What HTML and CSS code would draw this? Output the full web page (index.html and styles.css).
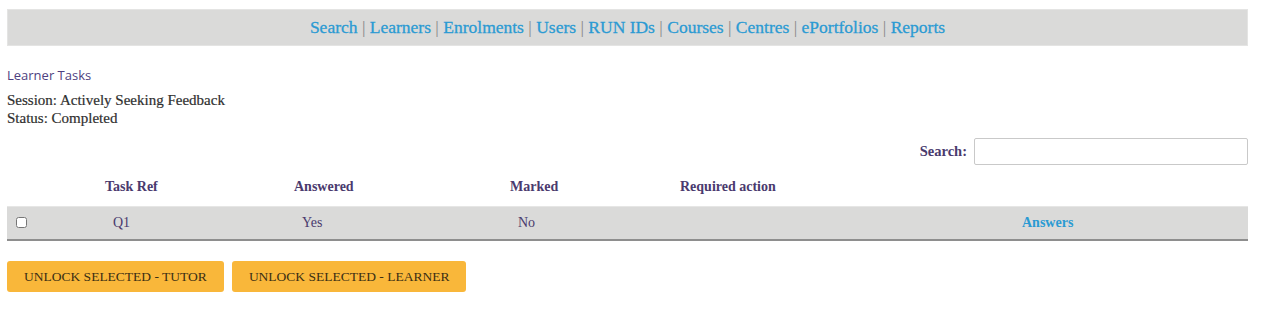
FILE: index.html
```html
<!DOCTYPE html>
<html lang="en">
<head>
  <meta charset="UTF-8" />
  <title>Learner Tasks</title>
  <link rel="stylesheet" href="styles.css">
</head>
<body>
  <div class="page">
    <!-- Top navigation -->
    <nav class="topnav">
      <a href="#">Search</a> | <a href="#">Learners</a> | <a href="#">Enrolments</a> |
      <a href="#">Users</a> | <a href="#">RUN IDs</a> | <a href="#">Courses</a> |
      <a href="#">Centres</a> | <a href="#">ePortfolios</a> | <a href="#">Reports</a>
    </nav>

    <h2 class="page-title">Learner Tasks</h2>
    <div class="session-info">
      <div>Session: Actively Seeking Feedback</div>
      <div>Status: Completed</div>
    </div>

    <div class="table-filter">
      <label for="taskSearch">Search:</label>
      <input type="search" id="taskSearch" />
    </div>

    <table class="tasks">
      <thead>
        <tr>
          <th class="col-check"></th>
          <th class="col-ref">Task Ref</th>
          <th class="col-ans">Answered</th>
          <th class="col-mark">Marked</th>
          <th class="col-req">Required action</th>
          <th class="col-link"></th>
        </tr>
      </thead>
      <tbody>
        <tr>
          <td class="col-check"><input type="checkbox" /></td>
          <td class="col-ref">Q1</td>
          <td>Yes</td>
          <td>No</td>
          <td></td>
          <td class="col-link"><a href="#">Answers</a></td>
        </tr>
      </tbody>
    </table>

    <div class="actions">
      <button>Unlock selected - Tutor</button>
      <button>Unlock selected - Learner</button>
    </div>
  </div>
</body>
</html>
```

FILE: styles.css
```css
* { box-sizing: border-box; margin: 0; padding: 0; }
body {
  background: #fff;
  font-family: "Liberation Serif", serif;
  color: #333;
}
.page { padding: 9px 28px 0 7px; }

.topnav {
  height: 37px;
  background: #dadad9;
  border: 1px solid #e4e4e3;
  text-align: center;
  font-size: 17.5px;
  line-height: 35px;
  color: #888;
}
.topnav a {
  color: #2b9ad3;
  text-decoration: none;
  -webkit-text-stroke: 0.3px #2b9ad3;
}

.page-title {
  margin-top: 20px;
  font-family: "Open Sans", sans-serif;
  font-weight: normal;
  font-size: 13px;
  color: #4e3f7f;
}
.session-info {
  margin-top: 7px;
  font-size: 15px;
  line-height: 18px;
  color: #2f2f2f;
  -webkit-text-stroke: 0.2px #2f2f2f;
}

.table-filter {
  display: flex;
  justify-content: flex-end;
  align-items: center;
  gap: 7px;
  margin-top: 11px;
  font-size: 14.5px;
  font-weight: bold;
  color: #4a3a6e;
}
.table-filter input {
  width: 274px;
  height: 27px;
  border: 1px solid #c9c9c9;
  border-radius: 2px;
}

.tasks {
  width: 100%;
  border-collapse: collapse;
  margin-top: 10px;
  font-size: 14px;
}
.tasks th {
  height: 31px;
  text-align: left;
  padding: 0 8px 6px;
  font-weight: bold;
  color: #4a3a6e;
}
.tasks tbody tr {
  background: #dadad9;
  border-top: 1px solid #e6e6e5;
  border-bottom: 2px solid #8e8e8e;
}
.tasks td {
  height: 34px;
  padding: 0 0 0 16px;
  color: #4a3a6e;
}
.tasks .col-check { width: 90px; padding-left: 9px; }
.tasks .col-check input { width: 11px; height: 11px; margin-top: 3px; }
.tasks .col-ref { width: 189px; }
.tasks .col-ans { width: 216px; }
.tasks .col-mark { width: 170px; }
.tasks .col-req { width: 334px; }
.tasks td.col-link a {
  color: #2b9ad3;
  text-decoration: none;
  font-weight: bold;
}

.actions {
  display: flex;
  gap: 8px;
  margin-top: 20px;
}
.actions button {
  height: 31px;
  padding: 0 17px;
  border: none;
  border-radius: 3px;
  background: #f9b73a;
  font-family: "Liberation Serif", serif;
  font-size: 13.5px;
  text-transform: uppercase;
  color: #3b2f14;
  cursor: pointer;
}
```
